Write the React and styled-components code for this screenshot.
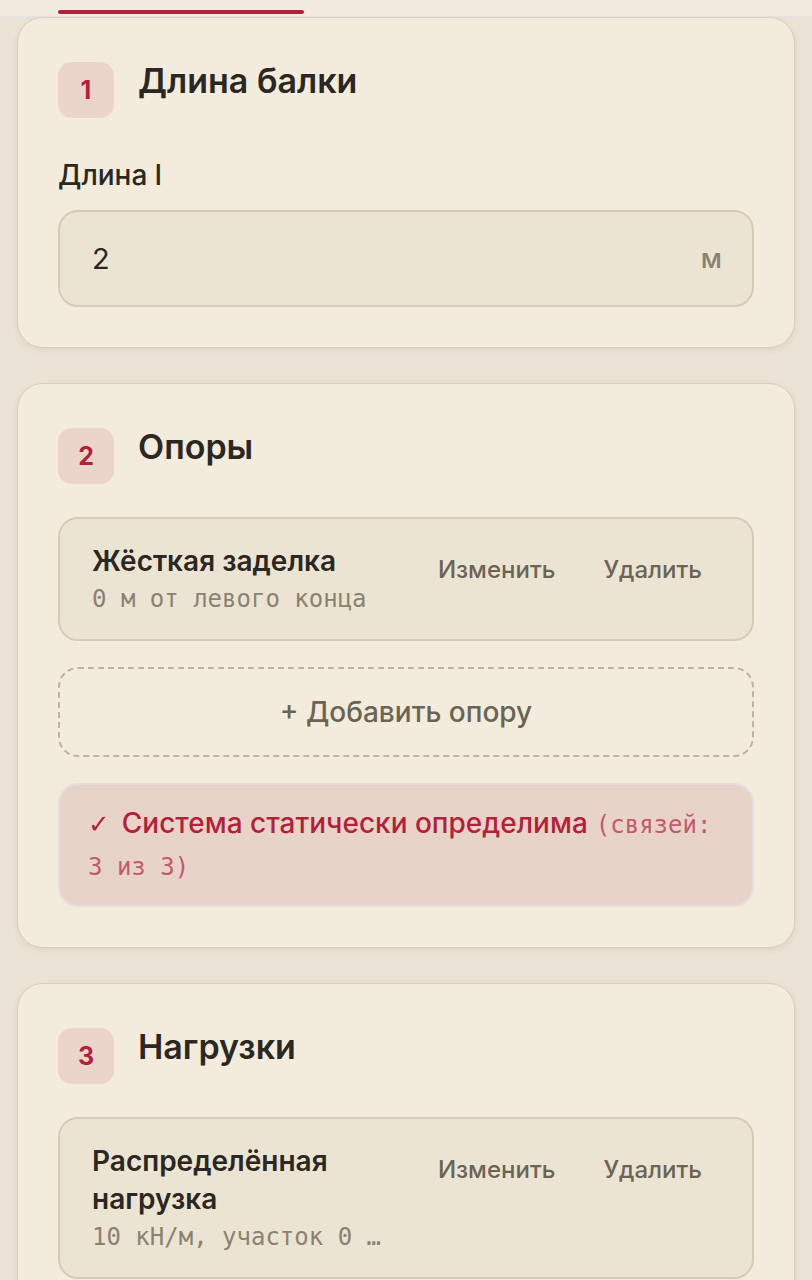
import styled, { createGlobalStyle } from "styled-components";

const GlobalStyle = createGlobalStyle`
  * { box-sizing: border-box; }
  body {
    margin: 0;
    background: #ebe3d5;
    font-family: Inter, "Noto Sans", sans-serif;
    color: #2b2722;
  }
`;

const TabBar = styled.div`
  position: sticky;
  top: 0;
  z-index: 2;
  height: 17px;
  background: #f2ece0;
  border-bottom: 1px solid #e3e2e6;
  padding: 10px 0 0 58px;
`;

const ActiveTab = styled.div`
  width: 246px;
  height: 4px;
  border-radius: 2px;
  background: #b41f3a;
`;

const Page = styled.main`
  display: flex;
  flex-direction: column;
  gap: 35px;
  padding: 0 17px 40px;
`;

const Card = styled.section`
  background: #f3ecdd;
  border: 1px solid #d8cfbb;
  border-radius: 26px;
  padding: 44px 40px 40px;
  box-shadow: 0 2px 6px rgba(120, 100, 70, 0.12);
`;

const CardHead = styled.div`
  display: flex;
  align-items: flex-start;
  gap: 24px;
  margin-bottom: 33px;
`;

const Badge = styled.div`
  width: 56px;
  height: 56px;
  flex: none;
  border-radius: 14px;
  background: #ebd5cb;
  color: #b41f3a;
  font-size: 25px;
  font-weight: 700;
  display: flex;
  align-items: center;
  justify-content: center;
`;

const CardTitle = styled.h2`
  margin: 0;
  font-size: 34px;
  font-weight: 600;
  line-height: 1.1;
  color: #2b2722;
`;

const Label = styled.label`
  display: block;
  padding-top: 6px;
  margin-bottom: 17px;
  font-size: 28px;
  font-weight: 500;
  line-height: 1.3;
`;

const InputBox = styled.div`
  height: 97px;
  display: flex;
  align-items: center;
  padding: 0 30px 0 32px;
  background: #ece4d3;
  border: 2px solid #d6ccb6;
  border-radius: 20px;
`;

const Value = styled.span`
  flex: 1;
  font-size: 29px;
  color: #2b2722;
`;

const Unit = styled.span`
  font-size: 27px;
  font-weight: 500;
  color: #8a8270;
`;

const List = styled.div`
  display: flex;
  flex-direction: column;
  gap: 26px;
`;

const Item = styled.div`
  display: flex;
  align-items: flex-start;
  gap: 32px;
  padding: 24px 32px;
  background: #ece4d3;
  border: 2px solid #d6ccb6;
  border-radius: 20px;
`;

const ItemText = styled.div`
  flex: 1;
  min-width: 0;
`;

const ItemTitle = styled.div`
  font-size: 28px;
  font-weight: 600;
  line-height: 1.35;
  color: #2b2722;
`;

const ItemSub = styled.div`
  margin-top: 3px;
  font-family: "DejaVu Sans Mono", "Liberation Mono", monospace;
  font-size: 24px;
  line-height: 1.3;
  color: #8a8270;
  white-space: nowrap;
  overflow: hidden;
  text-overflow: ellipsis;
`;

const Actions = styled.div`
  display: flex;
  gap: 12px;
  flex: none;
`;

const TextButton = styled.button`
  background: none;
  border: none;
  padding: 10px 18px;
  font-family: inherit;
  font-size: 24px;
  font-weight: 500;
  line-height: 1.4;
  color: #6b6455;
  cursor: pointer;
`;

const AddButton = styled.button`
  height: 90px;
  width: 100%;
  background: transparent;
  border: 2px dashed #bdb39e;
  border-radius: 20px;
  font-family: inherit;
  font-size: 28px;
  font-weight: 500;
  color: #6b6455;
  cursor: pointer;
`;

const Status = styled.div`
  padding: 18px 28px;
  background: #e8d3c9;
  border: 2px solid #e3dfe5;
  border-radius: 20px;
  font-size: 28px;
  font-weight: 500;
  line-height: 40px;
  color: #b41f3a;
`;

const Check = styled.span`
  display: inline-block;
  font-family: "DejaVu Sans", sans-serif;
  font-weight: 400;
  font-size: 26px;
  line-height: 40px;
  margin-right: 12px;
`;

const StatusNote = styled.span`
  margin-left: 8px;
  font-family: "DejaVu Sans Mono", "Liberation Mono", monospace;
  font-size: 24px;
  font-weight: 400;
  color: #c45a6b;
`;

const Entry = ({ title, sub }) => (
  <Item>
    <ItemText>
      <ItemTitle>{title}</ItemTitle>
      <ItemSub>{sub}</ItemSub>
    </ItemText>
    <Actions>
      <TextButton>Изменить</TextButton>
      <TextButton>Удалить</TextButton>
    </Actions>
  </Item>
);

const Head = ({ n, children }) => (
  <CardHead>
    <Badge>{n}</Badge>
    <CardTitle>{children}</CardTitle>
  </CardHead>
);

export default function App() {
  return (
    <>
      <GlobalStyle />
      <TabBar>
        <ActiveTab />
      </TabBar>
      <Page>
        <Card>
          <Head n={1}>Длина балки</Head>
          <Label>Длина l</Label>
          <InputBox>
            <Value>2</Value>
            <Unit>м</Unit>
          </InputBox>
        </Card>

        <Card>
          <Head n={2}>Опоры</Head>
          <List>
            <Entry title="Жёсткая заделка" sub="0 м от левого конца" />
            <AddButton>+ Добавить опору</AddButton>
            <Status>
              <Check>✓</Check>Система статически определима
              <StatusNote>(связей: 3 из 3)</StatusNote>
            </Status>
          </List>
        </Card>

        <Card>
          <Head n={3}>Нагрузки</Head>
          <List>
            <Entry title="Распределённая нагрузка" sub="10 кН/м, участок 0 – 2 м" />
            <AddButton>+ Добавить нагрузку</AddButton>
          </List>
        </Card>
      </Page>
    </>
  );
}
